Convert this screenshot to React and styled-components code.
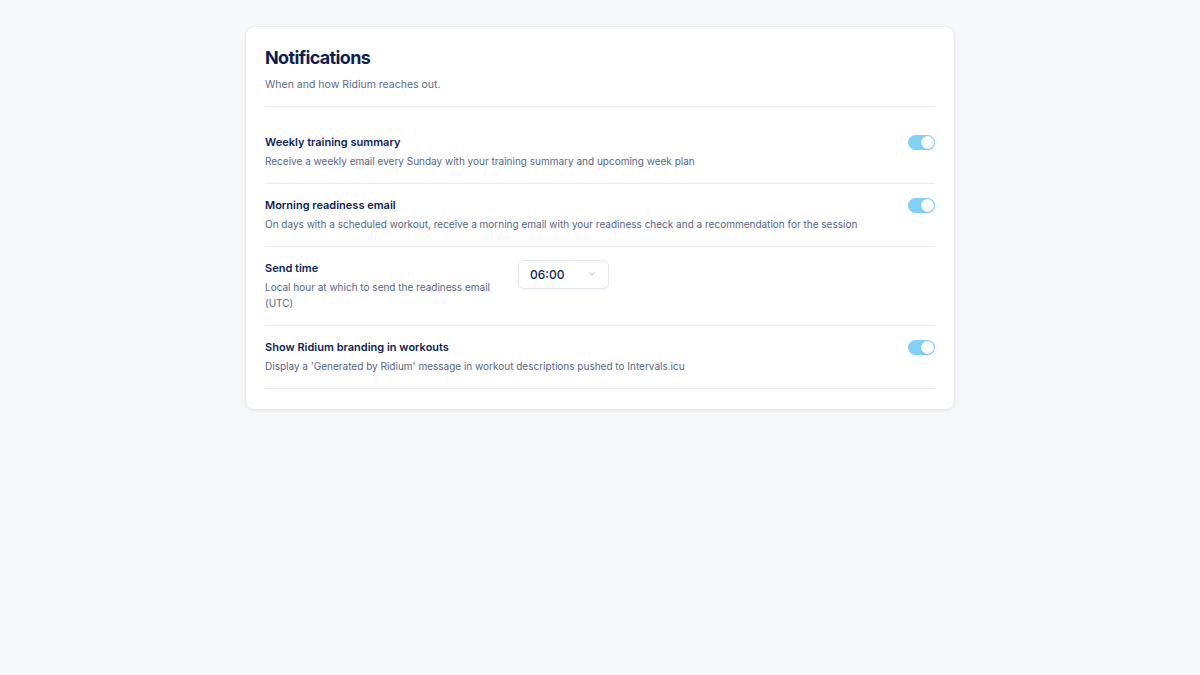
import React, { useState } from 'react';
import styled, { createGlobalStyle } from 'styled-components';

const GlobalStyle = createGlobalStyle`
  html, body {
    margin: 0;
    padding: 0;
    background: #f7f8fa;
    font-family: Inter, "Noto Sans", sans-serif;
    -webkit-font-smoothing: antialiased;
  }
`;

const settings = [
  {
    id: 'weekly',
    title: 'Weekly training summary',
    description: 'Receive a weekly email every Sunday with your training summary and upcoming week plan',
    type: 'toggle',
  },
  {
    id: 'morning',
    title: 'Morning readiness email',
    description:
      'On days with a scheduled workout, receive a morning email with your readiness check and a recommendation for the session',
    type: 'toggle',
  },
  {
    id: 'sendTime',
    title: 'Send time',
    description: 'Local hour at which to send the readiness email (UTC)',
    type: 'select',
  },
  {
    id: 'branding',
    title: 'Show Ridium branding in workouts',
    description: "Display a 'Generated by Ridium' message in workout descriptions pushed to Intervals.icu",
    type: 'toggle',
  },
];

const Toggle = ({ checked, onChange }) => (
  <Track $on={checked} onClick={() => onChange(!checked)} role="switch" aria-checked={checked}>
    <Knob $on={checked} />
  </Track>
);

const TimeSelect = ({ value }) => (
  <SelectBox>
    <span>{value}</span>
    <svg width="10" height="10" viewBox="0 0 24 24" fill="none" stroke="#9aa5b8" strokeWidth="2" strokeLinecap="round" strokeLinejoin="round">
      <path d="m6 9 6 6 6-6" />
    </svg>
  </SelectBox>
);

export default function App() {
  const [values, setValues] = useState({ weekly: true, morning: true, branding: true });

  return (
    <>
      <GlobalStyle />
      <Page>
        <Card>
          <Header>
            <Title>Notifications</Title>
            <Subtitle>When and how Ridium reaches out.</Subtitle>
          </Header>
          <List>
            {settings.map((s) => (
              <Row key={s.id}>
                <Text $narrow={s.type === 'select'}>
                  <Label>{s.title}</Label>
                  <Description>{s.description}</Description>
                </Text>
                {s.type === 'toggle' ? (
                  <Toggle
                    checked={values[s.id]}
                    onChange={(v) => setValues({ ...values, [s.id]: v })}
                  />
                ) : (
                  <TimeSelect value="06:00" />
                )}
              </Row>
            ))}
          </List>
        </Card>
      </Page>
    </>
  );
}

const Page = styled.div`
  min-height: 675px;
  display: flex;
  justify-content: center;
  align-items: flex-start;
  padding-top: 26px;
  box-sizing: border-box;
`;

const Card = styled.div`
  width: 710px;
  box-sizing: border-box;
  background: #fff;
  border: 1px solid #e8ebf0;
  border-radius: 10px;
  box-shadow: 0 1px 3px rgba(15, 30, 60, 0.06);
  padding: 19px 19px 20px;
`;

const Header = styled.div`
  padding-bottom: 13px;
  border-bottom: 1px solid #e6e9ef;
`;

const Title = styled.h2`
  margin: 0;
  font-size: 18px;
  line-height: 24px;
  font-weight: 700;
  letter-spacing: -0.035em;
  color: #0c1f55;
`;

const Subtitle = styled.p`
  margin: 7px 0 0;
  font-size: 10.5px;
  line-height: 16px;
  color: #5c6b86;
`;

const List = styled.div`
  margin-top: 13.5px;
`;

const Row = styled.div`
  display: flex;
  align-items: flex-start;
  gap: 28px;
  padding: 13px 0 14px;
  border-bottom: 1px solid #e6e9ef;
`;

const Text = styled.div`
  flex: ${(p) => (p.$narrow ? '0 0 225px' : '1 1 auto')};
  display: flex;
  flex-direction: column;
  gap: 3px;
`;

const Label = styled.div`
  font-size: 11px;
  line-height: 16px;
  font-weight: 600;
  color: #0c1f55;
`;

const Description = styled.div`
  font-size: 10px;
  line-height: 16px;
  color: #566683;
`;

const Track = styled.button`
  flex: 0 0 auto;
  width: 27px;
  height: 15px;
  margin-top: 1px;
  padding: 1px;
  border: none;
  border-radius: 999px;
  background: ${(p) => (p.$on ? '#7fd1f8' : '#d5dbe5')};
  display: flex;
  justify-content: ${(p) => (p.$on ? 'flex-end' : 'flex-start')};
  align-items: center;
  cursor: pointer;
  box-sizing: border-box;
`;

const Knob = styled.span`
  width: 13px;
  height: 13px;
  border-radius: 50%;
  background: #fff;
  box-shadow: 0 1px 2px rgba(0, 0, 0, 0.12);
`;

const SelectBox = styled.div`
  width: 91px;
  height: 29px;
  box-sizing: border-box;
  border: 1px solid #e3e7ee;
  border-radius: 6px;
  background: #fff;
  display: flex;
  align-items: center;
  justify-content: space-between;
  padding: 0 11px 0 11px;
  font-size: 12px;
  font-weight: 500;
  color: #0c1f55;
  box-shadow: 0 1px 2px rgba(15, 30, 60, 0.04);
`;
